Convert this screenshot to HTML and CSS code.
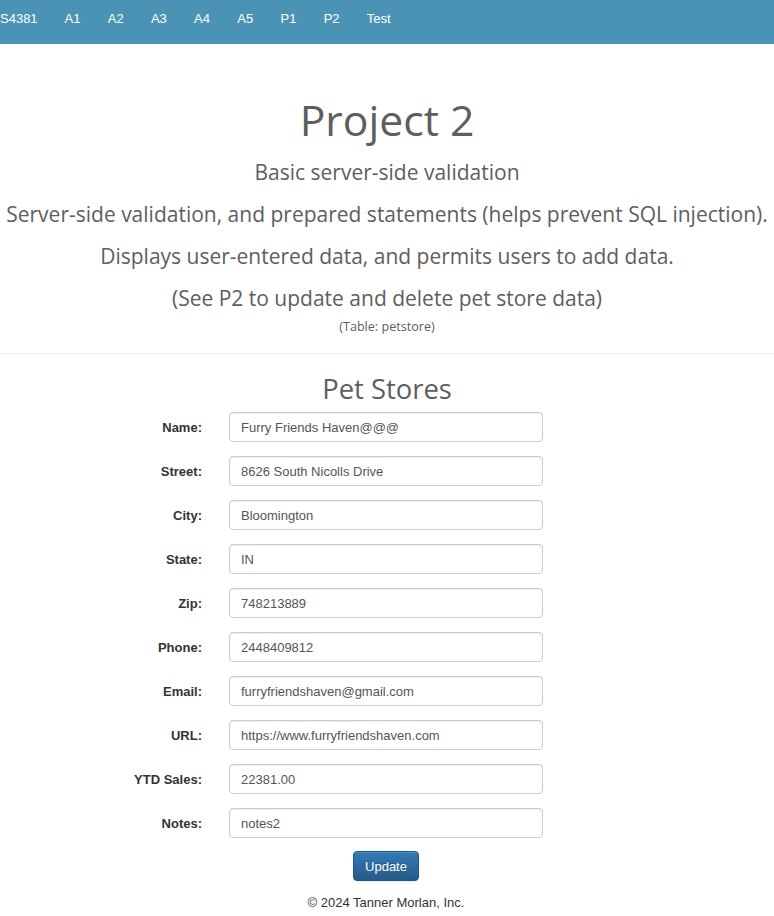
FILE: index.html
```html
<!DOCTYPE html>
<html lang="en">
<head>
<meta charset="utf-8">
<title>Project 2</title>
<link rel="stylesheet" href="styles.css">
</head>
<body>
<nav class="navbar">
  <a class="nav-link" href="#">S4381</a>
  <a class="nav-link" href="#">A1</a>
  <a class="nav-link" href="#">A2</a>
  <a class="nav-link" href="#">A3</a>
  <a class="nav-link" href="#">A4</a>
  <a class="nav-link" href="#">A5</a>
  <a class="nav-link" href="#">P1</a>
  <a class="nav-link" href="#">P2</a>
  <a class="nav-link" href="#">Test</a>
</nav>

<header class="intro">
  <h1 class="title">Project 2</h1>
  <p class="subtitle">Basic server-side validation</p>
  <p class="subtitle">Server-side validation, and prepared statements (helps prevent SQL injection).</p>
  <p class="subtitle">Displays user-entered data, and permits users to add data.</p>
  <p class="subtitle">(See P2 to update and delete pet store data)</p>
  <p class="table-note">(Table: petstore)</p>
</header>

<hr class="divider">

<main class="content">
  <h2 class="section-title">Pet Stores</h2>
  <form class="store-form">
    <label class="field-label" for="name">Name:</label>
    <input class="field-input" id="name" type="text" value="Furry Friends Haven@@@">
    <label class="field-label" for="street">Street:</label>
    <input class="field-input" id="street" type="text" value="8626 South Nicolls Drive">
    <label class="field-label" for="city">City:</label>
    <input class="field-input" id="city" type="text" value="Bloomington">
    <label class="field-label" for="state">State:</label>
    <input class="field-input" id="state" type="text" value="IN">
    <label class="field-label" for="zip">Zip:</label>
    <input class="field-input" id="zip" type="text" value="748213889">
    <label class="field-label" for="phone">Phone:</label>
    <input class="field-input" id="phone" type="text" value="2448409812">
    <label class="field-label" for="email">Email:</label>
    <input class="field-input" id="email" type="text" value="furryfriendshaven@gmail.com">
    <label class="field-label" for="url">URL:</label>
    <input class="field-input" id="url" type="text" value="https://www.furryfriendshaven.com">
    <label class="field-label" for="ytd">YTD Sales:</label>
    <input class="field-input" id="ytd" type="text" value="22381.00">
    <label class="field-label" for="notes">Notes:</label>
    <input class="field-input" id="notes" type="text" value="notes2">
  </form>
  <div class="actions">
    <button class="btn-primary" type="button">Update</button>
  </div>
  <footer class="footer">© 2024 Tanner Morlan, Inc.</footer>
</main>
</body>
</html>
```

FILE: styles.css
```css
* { box-sizing: border-box; }

html, body {
  margin: 0;
  padding: 0;
  background: #fff;
}

body {
  font-family: "Liberation Sans", Arial, sans-serif;
  font-size: 13px;
  color: #333;
}

.navbar {
  display: flex;
  align-items: flex-start;
  height: 44px;
  background: #4b93b5;
  padding-top: 10px;
}

.nav-link {
  color: #fff;
  text-decoration: none;
  font-size: 13px;
  line-height: 17px;
  padding: 0 13.65px;
}

.nav-link:first-child {
  padding-left: 0;
  padding-right: 13.3px;
}

.intro {
  text-align: center;
  color: #5e5e5e;
  font-family: "Open Sans", "DejaVu Sans", sans-serif;
}

.title {
  margin: 54px 0 19px;
  font-size: 42.7px;
  font-weight: 400;
  line-height: 44px;
}

.subtitle {
  margin: 0 0 20px;
  font-size: 21px;
  line-height: 22px;
  font-weight: 400;
}

.subtitle:nth-of-type(4) {
  margin-bottom: 9px;
}

.table-note {
  margin: 0;
  font-size: 12.6px;
  line-height: 17px;
}

.divider {
  margin: 18px 0 0;
  border: 0;
  border-top: 1px solid #eee;
  height: 0;
}

.content {
  display: flex;
  flex-direction: column;
}

.section-title {
  margin: 19px 0 8px;
  text-align: center;
  font-family: "Open Sans", "DejaVu Sans", sans-serif;
  font-weight: 400;
  font-size: 27.4px;
  line-height: 31px;
  color: #5e5e5e;
}

.store-form {
  display: grid;
  grid-template-columns: 202px 314px;
  column-gap: 27px;
  row-gap: 14px;
  align-items: center;
}

.field-label {
  text-align: right;
  font-weight: 700;
  font-size: 13px;
  color: #333;
}

.field-input {
  height: 30px;
  width: 314px;
  padding: 0 11px;
  font-family: "Liberation Sans", Arial, sans-serif;
  font-size: 13px;
  color: #555;
  background: #fff;
  border: 1px solid #ccc;
  border-radius: 4px;
  box-shadow: inset 0 1px 1px rgba(0, 0, 0, 0.075);
}

.actions {
  display: flex;
  justify-content: center;
  margin-top: 13px;
  padding-right: 2px;
}

.btn-primary {
  height: 30px;
  padding: 0 11px;
  font-family: "Liberation Sans", Arial, sans-serif;
  font-size: 13px;
  color: #fff;
  background-image: linear-gradient(to bottom, #337ab7 0, #265a88 100%);
  border: 1px solid #245580;
  border-radius: 4px;
  box-shadow: inset 0 1px 0 rgba(255, 255, 255, 0.15), 0 1px 1px rgba(0, 0, 0, 0.075);
  text-shadow: 0 -1px 0 rgba(0, 0, 0, 0.2);
}

.footer {
  margin-top: 13px;
  text-align: center;
  font-size: 13px;
  line-height: 17px;
  color: #333;
  padding-right: 2px;
}
```
